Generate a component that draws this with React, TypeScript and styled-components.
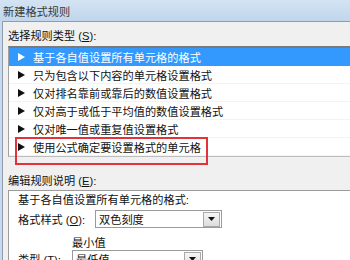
import styled, { createGlobalStyle } from "styled-components";

const GlobalStyle = createGlobalStyle`
  html, body {
    margin: 0;
    padding: 0;
    width: 350px;
    height: 260px;
    overflow: hidden;
    background: #c8daee;
  }

  body {
    font-family: "Liberation Sans", "Noto Sans CJK SC", sans-serif;
    font-size: 11.2px;
    color: #111;
  }
`;

const Window = styled.div`
  width: 420px;
  height: 260px;
  display: flex;
  flex-direction: column;
`;

const TitleBar = styled.div`
  height: 21px;
  flex-shrink: 0;
  display: flex;
  align-items: center;
  padding-left: 3px;
  color: #3a3a3a;
  background: linear-gradient(#d3e3f3, #c1d6eb);
`;

const Body = styled.div`
  flex: 1;
  margin-left: 2px;
  padding-left: 5px;
  background: #f0f0f0;
  border-top: 1px solid #8f9cab;
  border-left: 1px solid #8f9cab;
`;

const SectionLabel = styled.div<{ $top: number }>`
  margin-top: ${(p) => p.$top}px;
  line-height: 16px;
  height: 16px;
  white-space: nowrap;
`;

const Key = styled.span`
  text-decoration: underline;
`;

// Rule type list
const List = styled.div`
  position: relative;
  margin-top: 2px;
  background: #fff;
  border-top: 2px solid #7a7a7a;
  border-left: 1px solid #a0a0a0;
  border-bottom: 1px solid #bdbdbd;
`;

const Row = styled.div<{ $selected?: boolean }>`
  box-sizing: border-box;
  height: 18px;
  display: flex;
  align-items: center;
  gap: 8px;
  padding-left: 9px;
  white-space: nowrap;
  border-bottom: 1px solid ${(p) => (p.$selected ? "#3399ff" : "#f3f3f3")};
  background: ${(p) => (p.$selected ? "#3399ff" : "transparent")};
  color: ${(p) => (p.$selected ? "#fff" : "#111")};
`;

const Highlight = styled.div`
  position: absolute;
  top: 89px;
  left: 6px;
  width: 193px;
  height: 28px;
  box-sizing: border-box;
  border: 2px solid #e4323a;
  pointer-events: none;
`;

const Arrow = ({ color }: { color: string }) => (
  <svg width="7" height="8" viewBox="0 0 7 8">
    <polygon points="0,0 7,4 0,8" fill={color} />
  </svg>
);

// Rule description
const EditBox = styled.div`
  margin-top: 1px;
  height: 80px;
  padding: 1px 0 0 9px;
  background: #fff;
  border-top: 1px solid #9c9c9c;
  border-left: 1px solid #9c9c9c;
`;

const Line = styled.div`
  line-height: 16px;
  white-space: nowrap;
`;

const FieldRow = styled.div<{ $top: number }>`
  display: flex;
  align-items: center;
  margin-top: ${(p) => p.$top}px;
  white-space: nowrap;
`;

const FieldLabel = styled.div<{ $width: number }>`
  width: ${(p) => p.$width}px;
  flex-shrink: 0;
`;

const ColumnHead = styled.div`
  margin: 8px 0 0 54px;
  line-height: 14px;
`;

const Select = styled.div<{ $width: number }>`
  box-sizing: border-box;
  width: ${(p) => p.$width}px;
  height: 18px;
  display: flex;
  align-items: center;
  justify-content: space-between;
  padding: 0 1px 0 3px;
  background: #fff;
  border: 1px solid #9a9a9a;
`;

const SelectButton = styled.div`
  box-sizing: border-box;
  width: 17px;
  height: 15px;
  display: flex;
  align-items: center;
  justify-content: center;
  background: linear-gradient(#f6f6f6, #dcdcdc);
  border: 1px solid #a9a9a9;
`;

const Dropdown = ({ value, width }: { value: string; width: number }) => (
  <Select $width={width}>
    <span>{value}</span>
    <SelectButton>
      <svg width="7" height="4" viewBox="0 0 7 4">
        <polygon points="0,0 7,0 3.5,4" fill="#111" />
      </svg>
    </SelectButton>
  </Select>
);

const ruleTypes = [
  "基于各自值设置所有单元格的格式",
  "只为包含以下内容的单元格设置格式",
  "仅对排名靠前或靠后的数值设置格式",
  "仅对高于或低于平均值的数值设置格式",
  "仅对唯一值或重复值设置格式",
  "使用公式确定要设置格式的单元格",
];

export default function App() {
  return (
    <>
      <GlobalStyle />
      <Window>
        <TitleBar>新建格式规则</TitleBar>
        <Body>
          <SectionLabel $top={6}>
            选择规则类型 (<Key>S</Key>):
          </SectionLabel>
          <List>
            {ruleTypes.map((text, i) => (
              <Row key={text} $selected={i === 0}>
                <Arrow color={i === 0 ? "#fff" : "#111"} />
                {text}
              </Row>
            ))}
            <Highlight />
          </List>

          <SectionLabel $top={16}>
            编辑规则说明 (<Key>E</Key>):
          </SectionLabel>
          <EditBox>
            <Line>基于各自值设置所有单元格的格式:</Line>
            <FieldRow $top={2}>
              <FieldLabel $width={77}>
                格式样式 (<Key>O</Key>):
              </FieldLabel>
              <Dropdown value="双色刻度" width={127} />
            </FieldRow>
            <ColumnHead>最小值</ColumnHead>
            <FieldRow $top={0}>
              <FieldLabel $width={54}>
                类型 (<Key>T</Key>):
              </FieldLabel>
              <Dropdown value="最低值" width={131} />
            </FieldRow>
          </EditBox>
        </Body>
      </Window>
    </>
  );
}
